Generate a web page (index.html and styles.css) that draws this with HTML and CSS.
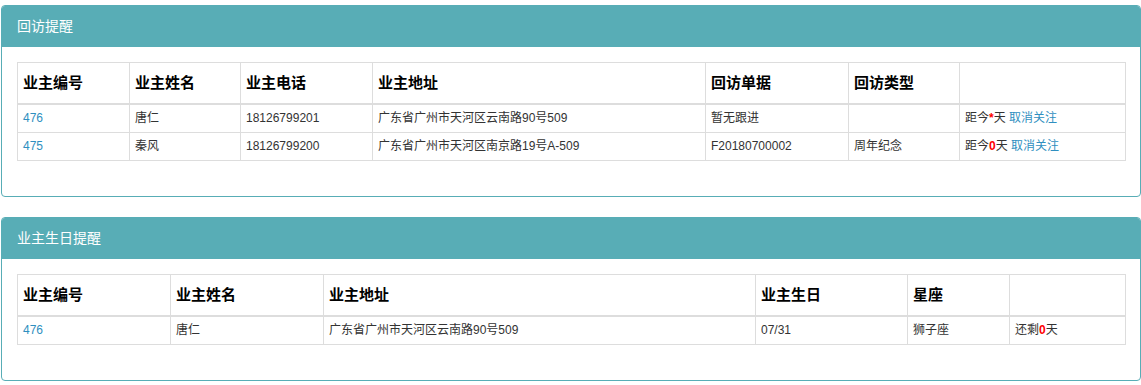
FILE: index.html
```html
<!DOCTYPE html>
<html lang="zh-CN">
<head>
<meta charset="utf-8">
<title>提醒</title>
<link rel="stylesheet" href="styles.css">
</head>
<body>
<div class="page">
  <div class="panel">
    <div class="panel-heading">回访提醒</div>
    <div class="panel-body">
      <table class="grid">
        <colgroup>
          <col class="c112"><col class="c111"><col class="c132"><col class="c333"><col class="c143"><col class="c111"><col class="c166">
        </colgroup>
        <thead>
          <tr><th>业主编号</th><th>业主姓名</th><th>业主电话</th><th>业主地址</th><th>回访单据</th><th>回访类型</th><th></th></tr>
        </thead>
        <tbody>
          <tr><td><a href="#">476</a></td><td>唐仁</td><td>18126799201</td><td>广东省广州市天河区云南路90号509</td><td>暂无跟进</td><td></td><td>距今<span class="red">*</span>天 <a href="#">取消关注</a></td></tr>
          <tr><td><a href="#">475</a></td><td>秦风</td><td>18126799200</td><td>广东省广州市天河区南京路19号A-509</td><td>F20180700002</td><td>周年纪念</td><td>距今<span class="red">0</span>天 <a href="#">取消关注</a></td></tr>
        </tbody>
      </table>
    </div>
  </div>
  <div class="panel">
    <div class="panel-heading">业主生日提醒</div>
    <div class="panel-body">
      <table class="grid">
        <colgroup>
          <col class="c153"><col class="c153"><col class="c432"><col class="c152"><col class="c102"><col class="c116">
        </colgroup>
        <thead>
          <tr><th>业主编号</th><th>业主姓名</th><th>业主地址</th><th>业主生日</th><th>星座</th><th></th></tr>
        </thead>
        <tbody>
          <tr><td><a href="#">476</a></td><td>唐仁</td><td>广东省广州市天河区云南路90号509</td><td>07/31</td><td>狮子座</td><td>还剩<span class="red">0</span>天</td></tr>
        </tbody>
      </table>
    </div>
  </div>
</div>
</body>
</html>
```
FILE: styles.css
```css
html, body {
  margin: 0;
  padding: 0;
  background: #fff;
}
body {
  font-family: "Liberation Sans", Arial, "Noto Sans CJK SC", sans-serif;
  font-size: 12px;
  line-height: 1.42857;
  color: #333;
}
.page {
  padding: 5px 0 0 1px;
}
.panel {
  border: 1px solid #58adb6;
  border-radius: 4px;
  margin-bottom: 20px;
  background: #fff;
}
.panel-heading {
  background: #58adb6;
  color: #fff;
  font-size: 14px;
  line-height: 21px;
  padding: 10px 15px;
  border-radius: 3px 3px 0 0;
}
.panel-body {
  padding: 15px;
}
.grid {
  width: 100%;
  table-layout: fixed;
  border-collapse: collapse;
  border: 1px solid #ddd;
  margin-bottom: 20px;
}
.grid th, .grid td {
  border: 1px solid #ddd;
  text-align: left;
  vertical-align: top;
}
.grid th {
  font-size: 15px;
  font-weight: bold;
  color: #000;
  line-height: 24px;
  padding: 8px 5px;
  border-bottom-width: 2px;
}
.grid td {
  padding: 5px;
  line-height: 17px;
}
.grid a {
  color: #2f8fc0;
  text-decoration: none;
}
.red {
  color: #f00;
  font-weight: bold;
}
.c112 { width: 112px; }
.c111 { width: 111px; }
.c132 { width: 132px; }
.c333 { width: 333px; }
.c143 { width: 143px; }
.c166 { width: 166px; }
.c153 { width: 153px; }
.c432 { width: 432px; }
.c152 { width: 152px; }
.c102 { width: 102px; }
.c116 { width: 116px; }
```
